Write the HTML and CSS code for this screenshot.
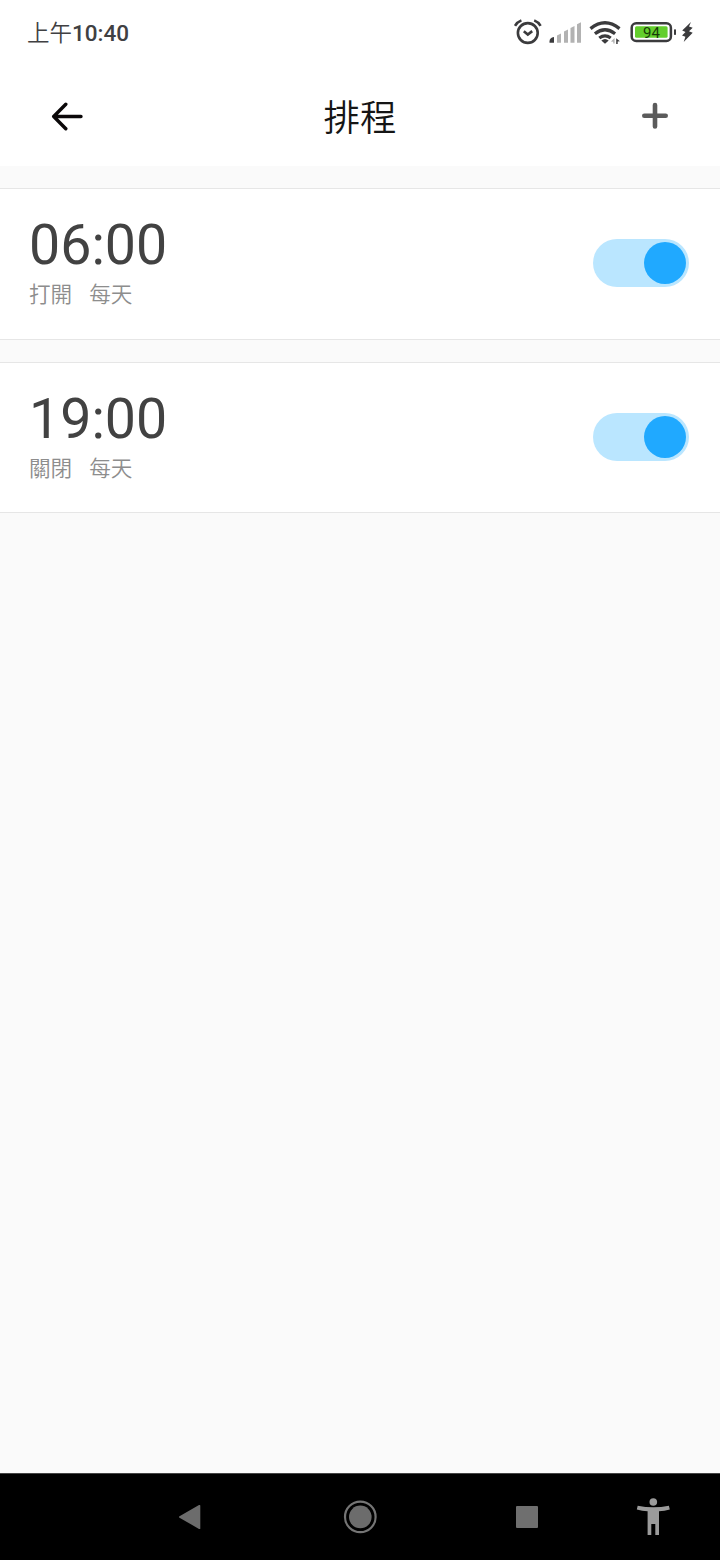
FILE: index.html
```html
<!DOCTYPE html>
<html lang="zh-Hant">
<head>
<meta charset="utf-8">
<title>排程</title>
<link rel="stylesheet" href="styles.css">
</head>
<body>
<div class="screen">
  <header class="status">
    <div class="clock"><span class="ampm">上午</span>10:40</div>
    <div class="status-icons">
      <svg class="alarm" width="28" height="28" viewBox="514 18 28 28" fill="none" stroke="#3b3b3d" stroke-width="2.6">
        <circle cx="527.8" cy="33" r="9.9"/>
        <path d="M523.8 31.3l4 3.2 4.4-3.4" stroke-width="2.6"/>
        <path d="M515 25.8q2.2-3.8 6.4-5.4M540.6 25.8q-2.2-3.8-6.4-5.4"/>
      </svg>
      <svg class="signal" width="33" height="22" viewBox="549 22 33 22" fill="#b2b2b2">
        <path d="M549.5 42.8v-1.3q0-3.7 4.5-4.5v5.8z" fill="#3b3b3d"/>
        <path d="M557 42.8v-7.3l4-2v9.3zM564 42.8V31.500l4-2v13.300zM570.500 42.800V28l4-2v16.800zM577 42.800V24.200l4-2v20.600z"/>
      </svg>
      <svg class="wifi" width="32" height="26" viewBox="589 20 32 26" fill="none" stroke="#3b3b3d" stroke-width="3.300">
        <path d="M590.500 28.600q14.500-11.800 29 0M594.900 33.700q10.100-7.800 20.200 0M599.300 38q5.700-4.200 11.400 0"/>
        <path d="M601.300 40.500q3.700-3 7.400 0l-3.700 3.300z" fill="#3b3b3d" stroke="none"/>
        <path d="M614.600 38v5.600h-1.300v-1.800l-2.400-.2z" fill="#b2b2b2" stroke="none"/>
        <path d="M616.200 38.200l3.700 3-2.200.4v2.400h-1.500z" fill="#3b3b3d" stroke="none"/>
      </svg>
      <svg class="battery" width="47" height="22" viewBox="630 21 47 22">
        <rect x="631.700" y="23.200" width="39.200" height="17.700" rx="4.500" fill="#fff" stroke="#3b3b3d" stroke-width="2.500"/>
        <rect x="635" y="26.300" width="32.600" height="11.400" rx="1.500" fill="#63ce2c"/>
        <rect x="674" y="29.200" width="2" height="5.800" rx=".8" fill="#3b3b3d"/>
        <text class="level" x="651.500" y="37.500" text-anchor="middle">94</text>
      </svg>
      <svg class="bolt" width="13" height="22" viewBox="681 21 13 22" fill="#3b3b3d">
        <path d="M691 22L682.200 30.500l3.300 1.500-3.500 3.500 3.400 1.300-1.700 5.200 9-9.200-3.700-1.600 3.700-3.500-3.700-1.300z"/>
      </svg>
    </div>
  </header>
  <div class="appbar">
    <svg class="back" width="34" height="30" viewBox="50 101 34 30" fill="none" stroke="#0b0809" stroke-width="3.400" stroke-linecap="round" stroke-linejoin="round">
      <path d="M65.800 104.200L53.700 116.500l12.100 12.300M54 116.500h27"/>
    </svg>
    <h1 class="title">排程</h1>
    <svg class="add" width="28" height="28" viewBox="641 102 28 28" stroke="#5b5b5b" stroke-width="4.600" stroke-linecap="round">
      <path d="M655 105.100v21.400M644.300 115.800h21.400"/>
    </svg>
  </div>
  <main class="list">
    <section class="card first">
      <div class="info">
        <div class="time">06:00</div>
        <div class="detail"><span>打開</span><span>每天</span></div>
      </div>
      <div class="toggle"><div class="knob"></div></div>
    </section>
    <section class="card">
      <div class="info">
        <div class="time">19:00</div>
        <div class="detail"><span>關閉</span><span>每天</span></div>
      </div>
      <div class="toggle"><div class="knob"></div></div>
    </section>
  </main>
  <nav class="navbar">
    <svg class="nav-back" width="24" height="28" viewBox="178 1503 24 28" fill="#6c6c6c">
      <path d="M179.500 1516.200L199 1505q1.300-.4 1.300.6v22.800q0 1-1.300.5l-19.500-11.200q-1-.8 0-1.500z"/>
    </svg>
    <svg class="nav-home" width="36" height="36" viewBox="342 1499 36 36" fill="#6c6c6c">
      <circle cx="360.300" cy="1516.900" r="15.300" fill="none" stroke="#757575" stroke-width="2.200"/>
      <circle cx="360.300" cy="1516.900" r="11.300"/>
    </svg>
    <div class="nav-recent"></div>
    <svg class="nav-access" width="34" height="40" viewBox="636 1497 34 40" fill="#9b9b9b">
      <circle cx="653.300" cy="1502" r="3.800"/>
      <path d="M637.700 1505.700q15.600 3 31.200 0l.9 3.700q-5.400 1.400-10.800 1.900v23.700h-3.700v-11h-4v11h-3.700v-23.700q-5.400-.5-10.800-1.900z"/>
    </svg>
  </nav>
</div>
</body>
</html>
```
FILE: styles.css
```css
* { box-sizing: border-box; }
body { margin: 0; font-family: Roboto, "Noto Sans CJK TC", sans-serif; }
.screen {
  width: 720px;
  height: 1560px;
  display: flex;
  flex-direction: column;
  background: #fafafa;
  overflow: hidden;
}
.status {
  height: 64px;
  padding: 0 26px 0 27px;
  display: flex;
  align-items: center;
  justify-content: space-between;
  background: #fff;
}
.clock {
  display: flex;
  align-items: center;
  font-size: 22.500px;
  line-height: 32px;
  font-weight: 500;
  color: #404042;
  padding-top: 1px;
}
.ampm { margin-top: -3px; font-size: 22.500px; font-weight: 350; font-family: "Noto Sans CJK TC", sans-serif; }
.status-icons { display: flex; align-items: center; }
.signal { margin-left: 7px; margin-top: 2px; }
.wifi { margin-left: 7px; margin-top: 2px; }
.battery { margin-left: 9px; }
.bolt { margin-left: 4px; }
.level { font: 400 15px Roboto, sans-serif; fill: #173a08; }
.appbar {
  height: 102px;
  padding: 0 51px 0 50px;
  display: flex;
  align-items: center;
  justify-content: space-between;
  background: #fff;
}
.back { margin-top: 1px; }
.add { margin-top: 2px; }
.title {
  margin: 8px 0 0 -5px;
  font-size: 36.500px;
  line-height: 54px;
  font-weight: 350;
  color: #151515;
}
.list { flex: 1; padding-top: 22px; display: flex; flex-direction: column; gap: 22px; }
.card {
  height: 151px;
  padding: 0 31px 0 29px;
  border-top: 1px solid #e6e6e6;
  border-bottom: 1px solid #e6e6e6;
  background: #fff;
  display: flex;
  align-items: center;
  justify-content: space-between;
}
.first { height: 152px; }
.info { margin-top: -1px; }
.time { font-size: 55.500px; line-height: 60px; color: #424242; }
.detail {
  display: flex;
  gap: 17px;
  margin-top: 3px;
  font-size: 21.600px;
  line-height: 32px;
  font-weight: 350;
  color: #8d8d8d;
}
.toggle {
  width: 96px;
  height: 48px;
  margin-bottom: 1px;
  padding: 3px;
  border-radius: 24px;
  background: #bae6ff;
  display: flex;
  justify-content: flex-end;
}
.first .toggle { margin-bottom: 2px; }
.knob { width: 42px; height: 42px; border-radius: 50%; background: #20a9ff; }
.navbar {
  height: 87px;
  padding: 0 50px 0 178px;
  border-top: 1px solid #444;
  background: #000;
  display: flex;
  align-items: center;
}
.nav-home { margin-left: 140px; }
.nav-recent { width: 22px; height: 22px; margin-left: 138px; border-radius: 1px; background: #6f6f6f; }
.nav-access { margin-left: 98px; }
```
